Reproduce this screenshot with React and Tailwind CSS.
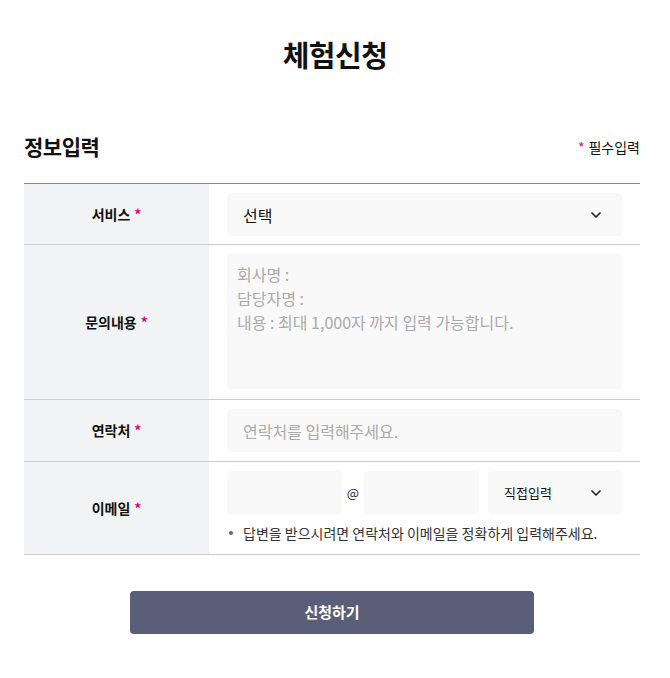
import { ChevronDown } from "lucide-react";

function Label({ children }) {
  return (
    <div className="w-[185px] shrink-0 bg-[#f2f3f5] flex items-center justify-center text-[14px] font-bold text-[#111]">
      {children}
      <span className="text-[#e6007e] ml-1">*</span>
    </div>
  );
}

export default function App() {
  return (
    <div
      className="bg-white min-h-[678px] w-full pt-[32px]"
      style={{ fontFamily: '"Noto Sans CJK KR", "Noto Sans", sans-serif' }}
    >
      <h1 className="text-center text-[29px] font-bold text-[#111] tracking-[-0.5px] leading-[44px]">
        체험신청
      </h1>

      <div className="pl-[24px] pr-[30px] pt-[55px]">
        <div className="flex items-end justify-between pb-[22px]">
          <h2 className="text-[21px] font-bold text-[#111] leading-[30px] tracking-[-0.5px]">정보입력</h2>
          <div className="text-[14px] text-[#111] leading-[24px] mb-[2px]">
            <span className="text-[#e6007e] mr-1">*</span>필수입력
          </div>
        </div>

        <div className="border-t border-[#888]">
          <div className="flex h-[61px] border-b border-[#ccc]">
            <Label>서비스</Label>
            <div className="flex-1 px-[18px] py-[9px]">
              <div className="h-[43px] bg-[#f9f9f9] rounded-[4px] flex items-center justify-between pl-[16px] pr-[18px]">
                <span className="text-[16px] text-[#111]">선택</span>
                <ChevronDown size={16} strokeWidth={2.5} className="text-[#222]" />
              </div>
            </div>
          </div>

          <div className="flex h-[155px] border-b border-[#ccc]">
            <Label>문의내용</Label>
            <div className="flex-1 px-[18px] py-[9px]">
              <div className="h-[135px] bg-[#f9f9f9] rounded-[4px] px-[10px] pt-[8px] text-[16px] leading-[24px] text-[#aaa]">
                <div>회사명 :</div>
                <div>담당자명 :</div>
                <div>내용 : 최대 1,000자 까지 입력 가능합니다.</div>
              </div>
            </div>
          </div>

          <div className="flex h-[62px] border-b border-[#ccc]">
            <Label>연락처</Label>
            <div className="flex-1 px-[18px] py-[9px]">
              <div className="h-[43px] bg-[#f9f9f9] rounded-[4px] flex items-center pl-[16px]">
                <span className="text-[16px] text-[#aaa]">연락처를 입력해주세요.</span>
              </div>
            </div>
          </div>

          <div className="flex h-[93px] border-b border-[#ccc]">
            <Label>이메일</Label>
            <div className="flex-1 px-[18px] pt-[9px]">
              <div className="flex items-center h-[43px]">
                <div className="w-[115px] h-[43px] bg-[#f9f9f9] rounded-[4px]" />
                <div className="w-[22px] text-center text-[13px] text-[#222]">@</div>
                <div className="w-[115px] h-[43px] bg-[#f9f9f9] rounded-[4px]" />
                <div className="ml-[9px] flex-1 h-[43px] bg-[#f9f9f9] rounded-[4px] flex items-center justify-between pl-[16px] pr-[18px]">
                  <span className="text-[13px] text-[#111]">직접입력</span>
                  <ChevronDown size={16} strokeWidth={2.5} className="text-[#222]" />
                </div>
              </div>
              <div className="flex items-center mt-[9px] text-[14px] text-[#333] leading-[20px]">
                <span className="w-[4px] h-[4px] bg-[#666] rounded-full ml-[2px] mr-[10px]" />
                답변을 받으시려면 연락처와 이메일을 정확하게 입력해주세요.
              </div>
            </div>
          </div>
        </div>

        <div className="flex justify-center pt-[36px]">
          <button className="w-[404px] h-[43px] bg-[#5a5e78] rounded-[4px] text-white text-[15px] font-bold">
            신청하기
          </button>
        </div>
      </div>
    </div>
  );
}
